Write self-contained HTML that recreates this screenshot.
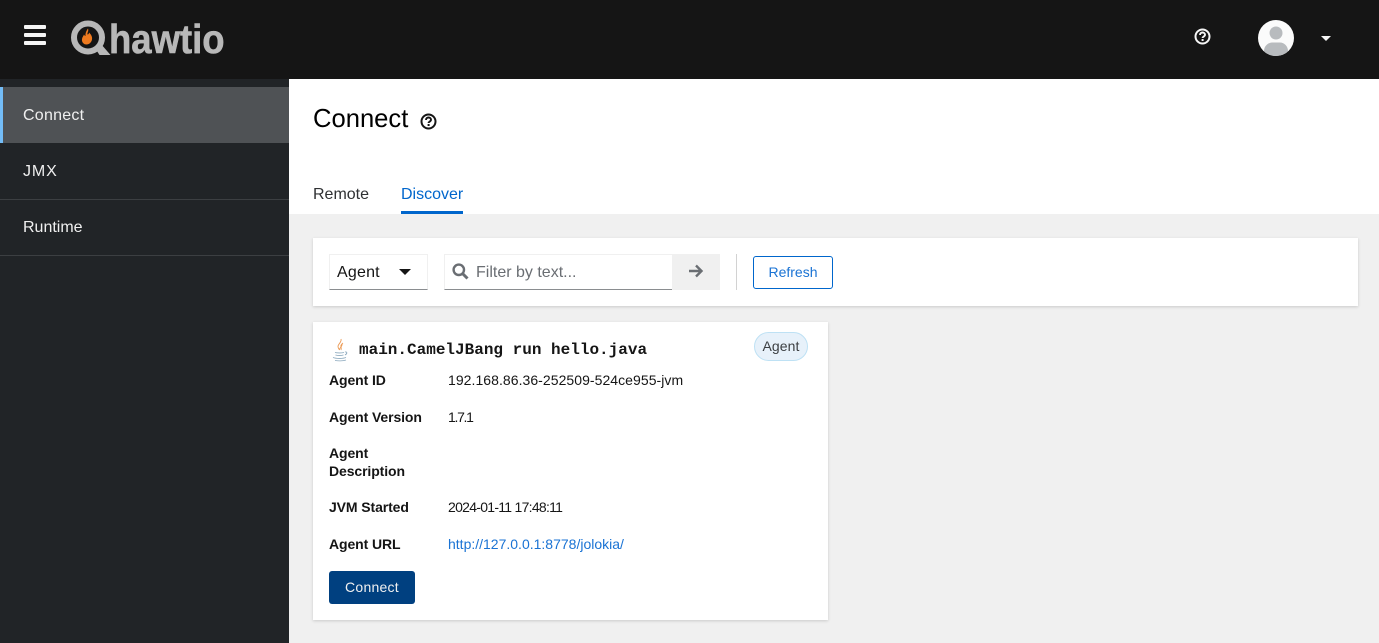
<!DOCTYPE html>
<html lang="en"><head><meta charset="utf-8"><title>Connect</title>
<style>
html,body{margin:0;padding:0}
body{width:1379px;height:643px;overflow:hidden;position:relative;background:#f0f0f0;font-family:"Liberation Sans",sans-serif;color:#151515}
.a{position:absolute;white-space:nowrap}
.b{font-weight:700;font-size:14px;line-height:18px;left:329px;letter-spacing:-.1px}
.v{font-size:14px;line-height:18px;left:448px}
.nav{left:23px;font-size:16px;line-height:20px;color:#f0f0f0}
.line{position:absolute;left:0;width:289px;height:1px;background:#3c3f42}
</style></head><body>
<div class="a" style="left:0;top:0;width:1379px;height:79px;background:#151515"></div>
<div class="a" style="left:24px;top:25px;width:22px;height:4px;background:#f5f5f5;border-radius:1px"></div>
<div class="a" style="left:24px;top:33px;width:22px;height:4px;background:#f5f5f5;border-radius:1px"></div>
<div class="a" style="left:24px;top:41px;width:22px;height:4px;background:#f5f5f5;border-radius:1px"></div>
<div class="a" style="left:109px;top:15px;font-size:41px;line-height:48px;font-weight:700;color:#b8b8b8;-webkit-text-stroke:.6px #b8b8b8;transform:scaleX(.89);transform-origin:0 0">hawtio</div>
<svg class="a" style="left:70px;top:19px" width="42" height="38" viewBox="0 0 42 38">
<circle cx="18" cy="18.500" r="14" fill="none" stroke="#b8b8b8" stroke-width="6"/>
<path d="M25 29L29.500 36H40.500L31 25Z" fill="#b8b8b8"/>
<path d="M18 9.500c1 3 -1 4 -.5 6c1 0 1.500-1 1.500-2c2 2 3.500 4 3 7c-.5 3-3 5-5.500 5c-3 0-5-2.500-4.500-5.500c.3-2 1.500-3 2-4.500c.5 1 1 1.500 1.500 1.500c-.3-3 1-5.500 2.500-7.500Z" fill="#ee7a1f"/>
</svg>
<svg class="a" style="left:1194px;top:28px" width="17" height="17" viewBox="0 0 17 17"><circle cx="8.500" cy="8.500" r="7" fill="none" stroke="#f5f5f5" stroke-width="2"/><path d="M6 7c0-3.300 5-3.300 5-.2c0 1.800-2.400 1.600-2.400 3.200" fill="none" stroke="#f5f5f5" stroke-width="1.900"/><rect x="7.600" y="11" width="2" height="2" fill="#f5f5f5"/></svg>
<svg class="a" style="left:1258px;top:20px" width="36" height="36" viewBox="0 0 36 36"><defs><clipPath id="c"><circle cx="18" cy="18" r="18"/></clipPath></defs><circle cx="18" cy="18" r="18" fill="#fbfbfb"/><g clip-path="url(#c)"><circle cx="18" cy="13" r="6.500" fill="#b8bbbe"/><path d="M6 36v-5c0-5 4-8.500 8-8.500h8c4 0 8 3.500 8 8.500v5Z" fill="#b8bbbe"/></g></svg>
<div class="a" style="left:1321px;top:36px;width:0;height:0;border-left:5px solid transparent;border-right:5px solid transparent;border-top:5px solid #f5f5f5"></div>

<div class="a" style="left:0;top:79px;width:289px;height:564px;background:#212427"></div>
<div class="a" style="left:0;top:87px;width:289px;height:56px;background:#4f5255"></div>
<div class="a" style="left:0;top:87px;width:3px;height:56px;background:#73bcf7"></div>
<div class="a nav" style="top:106px;letter-spacing:.25px">Connect</div>
<div class="a nav" style="top:162px;letter-spacing:.9px">JMX</div>
<div class="line" style="top:199px"></div>
<div class="a nav" style="top:218px">Runtime</div>
<div class="line" style="top:255px"></div>

<div class="a" style="left:289px;top:79px;width:1090px;height:135px;background:#fff"></div>
<div class="a" style="left:313px;top:103.500px;font-size:25.600px;line-height:30px;color:#000">Connect</div>
<svg class="a" style="left:420px;top:113px" width="17" height="17" viewBox="0 0 17 17"><circle cx="8.500" cy="8.500" r="7" fill="none" stroke="#151515" stroke-width="2"/><path d="M6 7c0-3.300 5-3.300 5-.2c0 1.800-2.400 1.600-2.400 3.200" fill="none" stroke="#151515" stroke-width="1.900"/><rect x="7.600" y="11" width="2" height="2" fill="#151515"/></svg>
<div class="a" style="left:313px;top:185px;font-size:16px;line-height:20px;color:#2f3133">Remote</div>
<div class="a" style="left:401px;top:185px;font-size:16px;line-height:20px;color:#06c">Discover</div>
<div class="a" style="left:401px;top:211px;width:62px;height:3px;background:#06c"></div>

<div class="a" style="left:313px;top:238px;width:1045px;height:68px;background:#fff;box-shadow:0 1px 3px rgba(3,3,3,.16)"></div>
<div class="a" style="left:329px;top:254px;width:99px;height:36px;box-sizing:border-box;border:1px solid #f0f0f0;border-bottom-color:#8a8d90"></div>
<div class="a" style="left:337px;top:263px;font-size:16px;line-height:20px;color:#151515;letter-spacing:.2px">Agent</div>
<div class="a" style="left:399px;top:269px;width:0;height:0;border-left:6px solid transparent;border-right:6px solid transparent;border-top:6px solid #151515"></div>
<div class="a" style="left:444px;top:254px;width:228px;height:36px;box-sizing:border-box;border:1px solid #f0f0f0;border-bottom-color:#8a8d90;border-right:0"></div>
<svg class="a" style="left:452px;top:263px" width="17" height="17" viewBox="0 0 17 17"><circle cx="6.800" cy="6.800" r="5.200" fill="none" stroke="#6a6e73" stroke-width="2.400"/><path d="M10.500 10.500L15.500 15.500" stroke="#6a6e73" stroke-width="3"/></svg>
<div class="a" style="left:476px;top:263px;font-size:16px;line-height:20px;color:#6a6e73">Filter by text...</div>
<div class="a" style="left:672px;top:254px;width:48px;height:36px;background:#f0f0f0"></div>
<svg class="a" style="left:688px;top:263px" width="16" height="16" viewBox="0 0 16 16"><path d="M1 8H13M8 2.500L13.500 8L8 13.500" fill="none" stroke="#6a6e73" stroke-width="2.400"/></svg>
<div class="a" style="left:736px;top:254px;width:1px;height:36px;background:#d2d2d2"></div>
<div class="a" style="left:753px;top:256px;width:80px;height:33px;box-sizing:border-box;border:1px solid #06c;border-radius:3px;color:#1a73d4;font-size:14px;line-height:31px;text-align:center">Refresh</div>

<div class="a" style="left:313px;top:322px;width:515px;height:298px;background:#fff;box-shadow:0 1px 3px rgba(3,3,3,.16)"></div>
<svg class="a" style="left:330px;top:338px" width="20" height="24" viewBox="0 0 20 24"><path d="M11 1c1 3-3 5-3 7.500c0 1.500 1 2.500 1.500 3.500c-.5-2 3.500-4 2.500-6.500M13 5c-2 1.500-2.500 2.500-2 4c.3 1 .5 2 0 3" fill="none" stroke="#eb9a55" stroke-width=".9"/><path d="M5 14.500c2 .6 8 .6 9-.2M5.500 17c2 .6 6 .6 8 0M3 19.500c3 1.200 10 1.200 13 0M15 14c2-.6 2.800 1.500 0 3" fill="none" stroke="#8ba8bd" stroke-width=".9"/><path d="M5 22.500c3 .6 8 .6 11-.5" fill="none" stroke="#8ba8bd" stroke-width=".8"/></svg>
<div class="a" style="left:359px;top:340px;font-family:'Liberation Mono',monospace;font-weight:700;font-size:16px;line-height:20px;color:#151515">main.CamelJBang run hello.java</div>
<div class="a" style="left:754px;top:332px;width:54px;height:29px;box-sizing:border-box;border:1px solid #bee1f4;border-radius:15px;background:#e7f1fa;font-size:14px;line-height:27px;text-align:center;color:#3c3f42;letter-spacing:.1px">Agent</div>

<div class="a b" style="top:371px">Agent ID</div><div class="a v" style="top:371px;letter-spacing:.05px">192.168.86.36-252509-524ce955-jvm</div>
<div class="a b" style="top:408px">Agent Version</div><div class="a v" style="top:408px;letter-spacing:-1.300px">1.7.1</div>
<div class="a b" style="top:444px">Agent<br>Description</div>
<div class="a b" style="top:498px">JVM Started</div><div class="a v" style="top:498px;letter-spacing:-.72px">2024-01-11 17:48:11</div>
<div class="a b" style="top:535px">Agent URL</div><div class="a v" style="top:535px;color:#1a73d4">http://127.0.0.1:8778/jolokia/</div>
<div class="a" style="left:329px;top:571px;width:86px;height:33px;background:#004080;border-radius:3px;color:#f0f0f0;font-size:14px;line-height:33px;text-align:center;letter-spacing:.25px">Connect</div>
</body></html>
